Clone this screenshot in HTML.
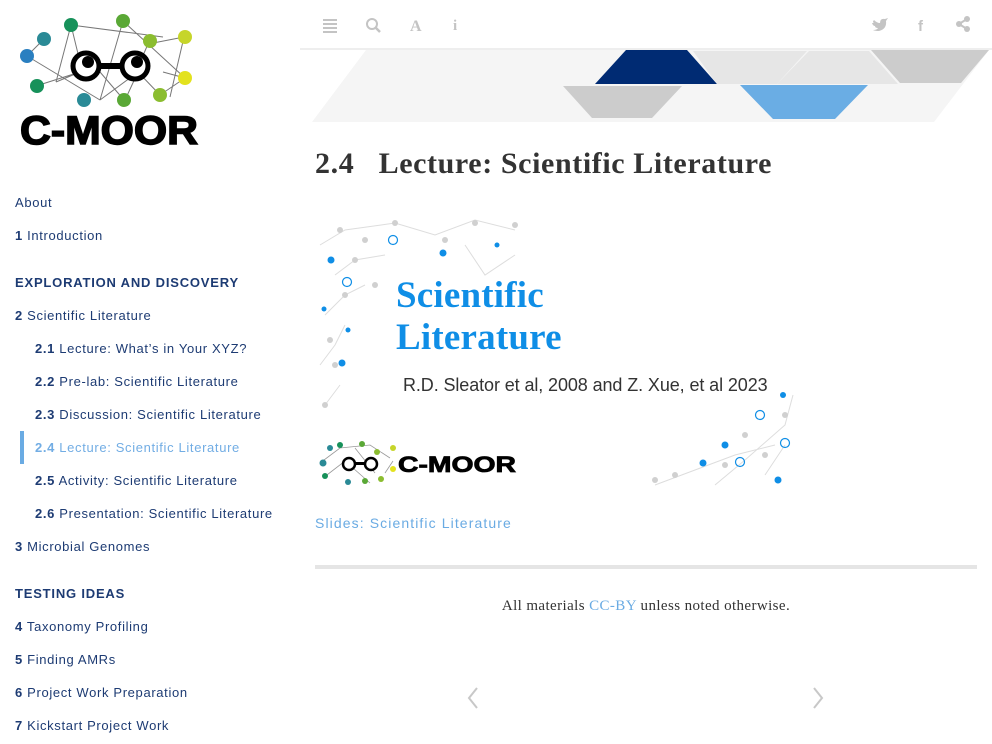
<!DOCTYPE html>
<html><head><meta charset="utf-8"><style>
*{margin:0;padding:0;box-sizing:border-box}
body{width:992px;height:744px;overflow:hidden;background:#fff;font-family:"Liberation Sans",sans-serif;position:relative}
.nav{position:absolute;left:15px;font-size:13px;letter-spacing:.65px;color:#1d3b73;white-space:nowrap;line-height:16px}
.nav b{font-weight:bold}
.sub{left:35px}
.hdr{font-weight:bold;letter-spacing:.8px;font-size:13px}
.act{color:#72ade4}
.bar{position:absolute;left:20px;top:431px;width:4px;height:33px;background:#6aabe3}
.topline{position:absolute;left:300px;top:48px;width:692px;height:2px;background:#eee}
h1{position:absolute;left:315px;top:147px;font-family:"Liberation Serif",serif;font-size:30px;letter-spacing:.6px;font-weight:bold;color:#333;white-space:nowrap}
.slide{position:absolute;left:315px;top:215px;width:480px;height:275px}
.st{position:absolute;left:81px;top:60px;font-size:37px;font-weight:bold;color:#0f8ee6;line-height:42px;font-family:"Liberation Serif",serif;letter-spacing:.2px}
.ss{position:absolute;left:88px;top:160px;font-size:18px;color:#333;white-space:nowrap;letter-spacing:-.1px}
.link{position:absolute;left:315px;top:515px;font-size:14px;color:#6aabe3;letter-spacing:1.1px}
.hr{position:absolute;left:315px;top:565px;width:662px;height:4px;background:#e5e5e5}
.foot{position:absolute;left:315px;width:662px;top:598px;text-align:center;font-family:"Liberation Serif",serif;font-size:15px;letter-spacing:.4px;color:#333}
.foot span{color:#6aabe3}
</style></head><body>

<svg style="position:absolute;left:18px;top:12px" width="185" height="135" viewBox="0 0 185 135">
<g stroke="#777" stroke-width="1" fill="none">
<path d="M9,44 L26,27 M53,13 L38,70 M53,13 L145,25 M53,13 L62,50 M105,9 L130,32 M105,9 L82,88 M130,32 L166,25 M166,25 L152,85 M130,32 L167,66 M9,44 L82,88 M18,74 L62,60 M82,88 L120,60 M120,60 L142,83 M145,60 L167,66 M167,66 L142,83 M106,88 L82,60 M38,70 L62,60 M120,60 L107,88 M130,32 L120,55"/>
</g>
<g>
<circle cx="26" cy="27" r="7" fill="#2a8a96"/><circle cx="9" cy="44" r="7" fill="#2a7fc0"/>
<circle cx="53" cy="13" r="7" fill="#17915a"/><circle cx="105" cy="9" r="7" fill="#5aa836"/>
<circle cx="132" cy="29" r="7" fill="#8bbd30"/><circle cx="167" cy="25" r="7" fill="#c6d52a"/>
<circle cx="167" cy="66" r="7" fill="#e3e21e"/><circle cx="142" cy="83" r="7" fill="#8bbd30"/>
<circle cx="106" cy="88" r="7" fill="#5aa836"/><circle cx="66" cy="88" r="7" fill="#2a8a96"/>
<circle cx="19" cy="74" r="7" fill="#17915a"/>
</g>
<circle cx="68" cy="54" r="13" fill="#fff" stroke="#000" stroke-width="5"/>
<circle cx="117" cy="54" r="13" fill="#fff" stroke="#000" stroke-width="5"/>
<rect x="80" y="51" width="26" height="6" fill="#000"/>
<circle cx="70" cy="50" r="6" fill="#000"/><circle cx="119" cy="50" r="6" fill="#000"/>
<text x="2" y="132" font-family="Liberation Sans" font-weight="bold" font-size="40" fill="#000" stroke="#000" stroke-width="1.5" textLength="178" lengthAdjust="spacingAndGlyphs">C-MOOR</text>
</svg>

<div class="nav" style="top:195px">About</div>
<div class="nav" style="top:228px"><b>1</b> Introduction</div>
<div class="nav hdr" style="top:275px">EXPLORATION AND DISCOVERY</div>
<div class="nav" style="top:308px"><b>2</b> Scientific Literature</div>
<div class="nav sub" style="top:341px"><b>2.1</b> Lecture: What’s in Your XYZ?</div>
<div class="nav sub" style="top:374px"><b>2.2</b> Pre-lab: Scientific Literature</div>
<div class="nav sub" style="top:407px"><b>2.3</b> Discussion: Scientific Literature</div>
<div class="bar"></div>
<div class="nav sub act" style="top:440px"><b>2.4</b> Lecture: Scientific Literature</div>
<div class="nav sub" style="top:473px"><b>2.5</b> Activity: Scientific Literature</div>
<div class="nav sub" style="top:506px"><b>2.6</b> Presentation: Scientific Literature</div>
<div class="nav" style="top:539px"><b>3</b> Microbial Genomes</div>
<div class="nav hdr" style="top:586px">TESTING IDEAS</div>
<div class="nav" style="top:619px"><b>4</b> Taxonomy Profiling</div>
<div class="nav" style="top:652px"><b>5</b> Finding AMRs</div>
<div class="nav" style="top:685px"><b>6</b> Project Work Preparation</div>
<div class="nav" style="top:718px"><b>7</b> Kickstart Project Work</div>

<svg style="position:absolute;left:0;top:0" width="992" height="50">
<g fill="#c4c4c4">
<rect x="323" y="19" width="14" height="2"/><rect x="323" y="23" width="14" height="2"/><rect x="323" y="27" width="14" height="2"/><rect x="323" y="31" width="14" height="2"/>
<circle cx="372" cy="24" r="5" fill="none" stroke="#c4c4c4" stroke-width="2"/><path d="M375,27 L380,32" stroke="#c4c4c4" stroke-width="2.5"/>
<text x="410" y="31" font-family="Liberation Serif" font-weight="bold" font-size="16">A</text>
<text x="453" y="30" font-family="Liberation Serif" font-weight="bold" font-size="15">i</text>
<path d="M874,20 q3,3 6,3 q0,-5 5,-4 l3,-1 l-2,3 q1,8 -7,10 q-4,0 -6,-1 q4,0 5,-2 q-3,0 -3,-2 q-2,0 -3,-3 q1,0 2,0 q-2,-1 0,-3z"/>
<text x="918" y="31" font-family="Liberation Sans" font-weight="bold" font-size="15">f</text>
<circle cx="967" cy="19" r="3"/><circle cx="959" cy="24" r="3"/><circle cx="967" cy="29" r="3"/>
<path d="M959,24 L967,19 M959,24 L967,29" stroke="#c4c4c4" stroke-width="2"/>
</g>
</svg>
<div class="topline"></div>

<svg style="position:absolute;left:0;top:0" width="992" height="125">
<polygon points="366,50 989,50 934,122 312,122" fill="#f5f5f5"/>
<polygon points="626,50 687,50 717,84 595,84" fill="#002b73"/>
<polygon points="693,51 807,51 777,84 717,84" fill="#e6e6e6"/>
<polygon points="809,51 869,51 898,84 777,84" fill="#e6e6e6"/>
<polygon points="871,50 989,50 961,83 900,83" fill="#cccccc"/>
<polygon points="563,86 682,86 652,118 592,118" fill="#cccccc"/>
<polygon points="740,85 868,85 835,119 773,119" fill="#6aade4"/>
</svg>

<h1>2.4&nbsp;&nbsp; Lecture: Scientific Literature</h1>

<div class="slide">
<svg style="position:absolute;left:0;top:0" width="480" height="275">
<g stroke="#ddd" stroke-width="1" fill="none">
<path d="M5,30 L30,15 L80,8 L120,20 L160,5 L200,15 M20,60 L40,45 L70,40 M10,100 L30,80 L50,70 M5,150 L20,130 L30,110 M10,190 L25,170 M150,30 L170,60 L200,40 M340,270 L380,255 L420,240 L460,230 M400,270 L430,245 L470,210 L478,180 M450,260 L470,230"/>
</g>
<g fill="#d0d0d0">
<circle cx="25" cy="15" r="3"/><circle cx="50" cy="25" r="3"/><circle cx="80" cy="8" r="3"/><circle cx="130" cy="25" r="3"/><circle cx="160" cy="8" r="3"/><circle cx="200" cy="10" r="3"/><circle cx="40" cy="45" r="3"/><circle cx="60" cy="70" r="3"/><circle cx="30" cy="80" r="3"/><circle cx="15" cy="125" r="3"/><circle cx="20" cy="150" r="3"/><circle cx="10" cy="190" r="3"/><circle cx="340" cy="265" r="3"/><circle cx="360" cy="260" r="3"/><circle cx="410" cy="250" r="3"/><circle cx="450" cy="240" r="3"/><circle cx="470" cy="200" r="3"/><circle cx="430" cy="220" r="3"/>
</g>
<g fill="#0f8ee6">
<circle cx="16" cy="45" r="3.5"/><circle cx="128" cy="38" r="3.5"/><circle cx="182" cy="30" r="2.5"/><circle cx="9" cy="94" r="2.5"/><circle cx="33" cy="115" r="2.5"/><circle cx="27" cy="148" r="3.5"/><circle cx="468" cy="180" r="3"/><circle cx="410" cy="230" r="3.5"/><circle cx="388" cy="248" r="3.5"/><circle cx="463" cy="265" r="3.5"/>
</g>
<g fill="none" stroke="#0f8ee6" stroke-width="1.2">
<circle cx="78" cy="25" r="4.5"/><circle cx="32" cy="67" r="4.5"/><circle cx="425" cy="247" r="4.5"/><circle cx="470" cy="228" r="4.5"/><circle cx="445" cy="200" r="4.5"/>
</g>
<g transform="translate(0,228)">
<path d="M5,20 L25,5 L55,2 L75,15 M8,35 L30,18 L55,40 M40,5 L60,30 M70,30 L78,18" stroke="#999" stroke-width="0.8" fill="none"/>
<circle cx="8" cy="20" r="3.5" fill="#2a8a96"/><circle cx="15" cy="5" r="3" fill="#2a8a96"/><circle cx="25" cy="2" r="3" fill="#17915a"/><circle cx="47" cy="1" r="3" fill="#5aa836"/><circle cx="62" cy="9" r="3" fill="#8bbd30"/><circle cx="78" cy="5" r="3" fill="#c6d52a"/><circle cx="78" cy="26" r="3" fill="#e3e21e"/><circle cx="66" cy="36" r="3" fill="#8bbd30"/><circle cx="50" cy="38" r="3" fill="#5aa836"/><circle cx="33" cy="39" r="3" fill="#2a8a96"/><circle cx="10" cy="33" r="3" fill="#17915a"/>
<circle cx="34" cy="21" r="6" fill="#fff" stroke="#000" stroke-width="2.5"/><circle cx="56" cy="21" r="6" fill="#fff" stroke="#000" stroke-width="2.5"/><rect x="40" y="19" width="10" height="3"/>
<text x="83" y="29" font-family="Liberation Sans" font-weight="bold" font-size="22" stroke="#000" stroke-width="0.8" textLength="118" lengthAdjust="spacingAndGlyphs">C-MOOR</text>
</g>
</svg>
<div class="st">Scientific<br>Literature</div>
<div class="ss">R.D. Sleator et al, 2008 and Z. Xue, et al 2023</div>
</div>

<div class="link">Slides: Scientific Literature</div>
<div class="hr"></div>
<div class="foot">All materials <span>CC-BY</span> unless noted otherwise.</div>

<svg style="position:absolute;left:466px;top:686px" width="14" height="24"><path d="M11,2 L3,12 L11,22" stroke="#c8c8c8" stroke-width="2" fill="none"/></svg>
<svg style="position:absolute;left:811px;top:686px" width="14" height="24"><path d="M3,2 L11,12 L3,22" stroke="#c8c8c8" stroke-width="2" fill="none"/></svg>
</body></html>
